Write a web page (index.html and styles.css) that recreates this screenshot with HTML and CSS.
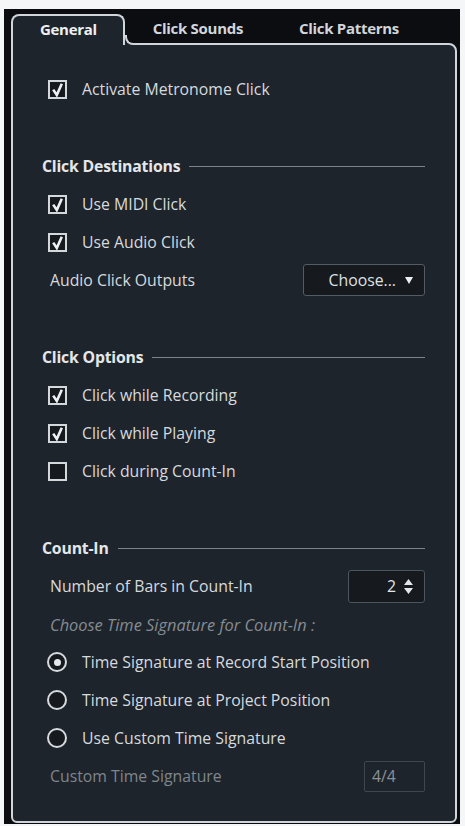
FILE: index.html
```html
<!DOCTYPE html>
<html>
<head>
<meta charset="utf-8">
<link rel="stylesheet" href="styles.css">
</head>
<body>
<div class="frame">
  <div class="tabs">
    <div class="tab active">General</div>
    <div class="tab">Click Sounds</div>
    <div class="tab">Click Patterns</div>
  </div>
  <div class="panel">
    <div class="row opt first">
      <span class="cb checked"><svg viewBox="0 0 15 15"><path d="M3.2 7.6 L6.8 13 L11.8 1.8"/></svg></span>
      <span>Activate Metronome Click</span>
    </div>

    <div class="header"><span>Click Destinations</span><i class="rule"></i></div>
    <div class="row opt">
      <span class="cb checked"><svg viewBox="0 0 15 15"><path d="M3.2 7.6 L6.8 13 L11.8 1.8"/></svg></span>
      <span>Use MIDI Click</span>
    </div>
    <div class="row opt">
      <span class="cb checked"><svg viewBox="0 0 15 15"><path d="M3.2 7.6 L6.8 13 L11.8 1.8"/></svg></span>
      <span>Use Audio Click</span>
    </div>
    <div class="row lbl">
      <span>Audio Click Outputs</span>
      <span class="choose">Choose...<svg class="tri" viewBox="0 0 8 7"><path d="M0 0 H8 L4 7 Z"/></svg></span>
    </div>

    <div class="header"><span>Click Options</span><i class="rule"></i></div>
    <div class="row opt">
      <span class="cb checked"><svg viewBox="0 0 15 15"><path d="M3.2 7.6 L6.8 13 L11.8 1.8"/></svg></span>
      <span>Click while Recording</span>
    </div>
    <div class="row opt">
      <span class="cb checked"><svg viewBox="0 0 15 15"><path d="M3.2 7.6 L6.8 13 L11.8 1.8"/></svg></span>
      <span>Click while Playing</span>
    </div>
    <div class="row opt">
      <span class="cb"></span>
      <span>Click during Count-In</span>
    </div>

    <div class="header"><span>Count-In</span><i class="rule"></i></div>
    <div class="row lbl">
      <span>Number of Bars in Count-In</span>
      <span class="spin">2<svg class="arrows" viewBox="0 0 9 15"><path d="M0 6 L4.5 0 L9 6 Z M0 9 H9 L4.5 15 Z"/></svg></span>
    </div>
    <div class="row lbl hint"><span>Choose Time Signature for Count-In :</span></div>
    <div class="row opt">
      <span class="radio on"></span>
      <span>Time Signature at Record Start Position</span>
    </div>
    <div class="row opt">
      <span class="radio"></span>
      <span>Time Signature at Project Position</span>
    </div>
    <div class="row opt">
      <span class="radio"></span>
      <span>Use Custom Time Signature</span>
    </div>
    <div class="row lbl dim">
      <span>Custom Time Signature</span>
      <span class="sig">4/4</span>
    </div>
  </div>
</div>
</body>
</html>
```

FILE: styles.css
```css
html, body {
  margin: 0;
  padding: 0;
  background: #f4f6f7;
}
body {
  font-family: "Open Sans", "Noto Sans", sans-serif;
  font-size: 15.8px;
  color: #d6dadf;
}
.frame {
  margin: 9px 5px 0 4px;
  height: 815px;
  box-sizing: border-box;
  padding: 5px 3px 1px 7px;
  background: #0b0d10;
  display: flex;
  flex-direction: column;
}
.tabs {
  display: flex;
  height: 29px;
  position: relative;
  z-index: 2;
}
.tab {
  padding: 0 28px;
  line-height: 29px;
  font-size: 15px;
  font-weight: 700;
  color: #d2d6db;
  letter-spacing: -0.3px;
}
.tab.active {
  position: relative;
  padding: 0 26px 0 27px;
  height: 31px;
  border: 2px solid #cfd5db;
  border-bottom: none;
  border-radius: 8px 8px 0 0;
  background: #1e242b;
  color: #eef0f2;
  line-height: 27px;
  margin-bottom: -2px;
  box-sizing: border-box;
}
.tab.active::before,
.tab.active::after {
  content: "";
  position: absolute;
  right: -12px;
  bottom: 0;
  width: 10px;
  height: 10px;
}
.tab.active::before {
  background: #1e242b;
}
.tab.active::after {
  width: 8px;
  height: 8px;
  background: #0b0d10;
  border-left: 2px solid #cfd5db;
  border-bottom: 2px solid #cfd5db;
  border-bottom-left-radius: 8px;
}
.panel {
  flex: 1;
  border: 2px solid #cfd5db;
  border-radius: 0 8px 6px 6px;
  background: #1e242b;
  padding: 25px 30px 0 0;
  display: flex;
  flex-direction: column;
}
.row {
  height: 38px;
  display: flex;
  align-items: center;
}
.opt {
  padding-left: 35px;
  gap: 15px;
}
.lbl {
  padding-left: 37px;
  justify-content: space-between;
}
.header {
  height: 20px;
  margin: 48px 0 9px 29px;
  display: flex;
  align-items: center;
  font-weight: 700;
  color: #e4e7ea;
  letter-spacing: -0.2px;
}
.rule {
  flex: 1;
  height: 1px;
  margin-left: 9px;
  background: #7b838c;
}
.cb {
  width: 19px;
  height: 19px;
  box-sizing: border-box;
  border: 2px solid #d3d8dd;
  background: #161a1f;
  display: flex;
  align-items: center;
  justify-content: center;
  flex: none;
}
.cb svg {
  width: 15px;
  height: 15px;
}
.cb path {
  fill: none;
  stroke: #eef0f2;
  stroke-width: 2.6;
}
.radio {
  width: 20px;
  height: 20px;
  box-sizing: border-box;
  border: 2.8px solid #d6dade;
  border-radius: 50%;
  background: #161a1f;
  flex: none;
  display: flex;
  align-items: center;
  justify-content: center;
  margin-left: -1px;
  margin-right: -0px;
}
.radio.on::after {
  content: "";
  width: 7px;
  height: 7px;
  border-radius: 50%;
  background: #e6e9ec;
}
.choose {
  width: 122px;
  height: 32px;
  box-sizing: border-box;
  border: 1px solid #535b64;
  border-radius: 3px;
  background: #16191d;
  display: flex;
  align-items: center;
  justify-content: flex-end;
  padding-right: 11px;
  gap: 9px;
  color: #dde1e5;
}
.tri {
  width: 8px;
  height: 7px;
  fill: #eef0f2;
}
.spin {
  width: 77px;
  height: 33px;
  box-sizing: border-box;
  border: 1px solid #4d555e;
  border-radius: 3px;
  background: #16191d;
  display: flex;
  align-items: center;
  justify-content: flex-end;
  padding-right: 11px;
  gap: 8px;
  color: #e3e6e9;
}
.arrows {
  width: 9px;
  height: 15px;
  fill: #e3e6e9;
}
.hint {
  font-style: italic;
  font-size: 16.4px;
  color: #858c93;
}
.dim {
  color: #7f868d;
}
.sig {
  width: 61px;
  height: 31px;
  box-sizing: border-box;
  border: 1px solid #3f464e;
  border-radius: 2px;
  display: flex;
  align-items: center;
  padding-left: 7px;
  color: #8b9198;
}
```
